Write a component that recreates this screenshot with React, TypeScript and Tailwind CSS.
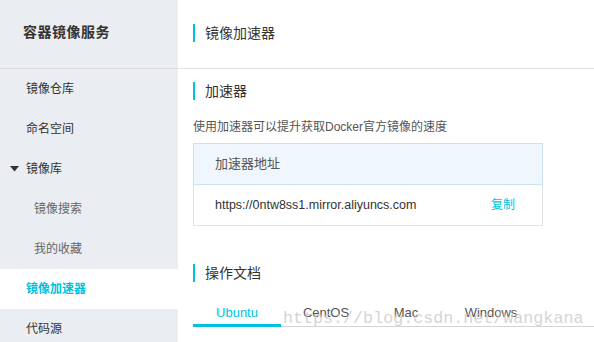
import React from "react";

const font = { fontFamily: '"Liberation Sans", Arial, "Noto Sans CJK SC", sans-serif' };

function SideItem({ label, sub, active, arrow }: { label: string; sub?: boolean; active?: boolean; arrow?: boolean }) {
  return (
    <div
      className={`h-[40px] shrink-0 flex items-center text-[12px] ${active ? "bg-white text-[#00c1de] font-bold" : sub ? "text-[#666]" : "text-[#333]"} ${sub ? "pl-[34px]" : arrow ? "pl-[10px]" : "pl-[26px]"}`}
    >
      {arrow && (
        <svg width="9" height="6" viewBox="0 0 9 6" className="mr-[7px]">
          <path d="M0 0 L9 0 L4.5 5.5 Z" fill="#333" />
        </svg>
      )}
      {label}
    </div>
  );
}

function Title({ text }: { text: string }) {
  return (
    <div className="flex items-center h-[18px]">
      <div className="w-[2px] h-[18px] bg-[#00c1de]" />
      <span className="ml-[10px] text-[14px] text-[#333]">{text}</span>
    </div>
  );
}

export default function App() {
  return (
    <div className="w-[594px] h-[342px] overflow-hidden flex bg-white relative" style={font}>
      <div className="w-[178px] shrink-0 bg-[#eaedf1] flex flex-col">
        <div className="h-[69px] shrink-0 border-b border-[#dcdcdc] flex items-center pl-[23px] pb-[4px] text-[14px] font-bold text-[#333] tracking-[0.5px]">
          容器镜像服务
        </div>
        <SideItem label="镜像仓库" />
        <SideItem label="命名空间" />
        <SideItem label="镜像库" arrow />
        <SideItem label="镜像搜索" sub />
        <SideItem label="我的收藏" sub />
        <SideItem label="镜像加速器" active />
        <SideItem label="代码源" />
      </div>
      <div className="flex-1 flex flex-col">
        <div className="h-[69px] shrink-0 border-b border-[#e3e3e3] pl-[15px] pt-[24px]">
          <Title text="镜像加速器" />
        </div>
        <div className="pl-[15px] pt-[13px]">
          <Title text="加速器" />
          <div className="mt-[18px] text-[12px] text-[#555]">使用加速器可以提升获取Docker官方镜像的速度</div>
          <div className="mt-[7px] w-[350px] border border-[#e3e3e3]">
            <div className="h-[42px] bg-[#eff6fe] border-b border-[#c9e2fa] -m-px mb-0 border-x border-t flex items-center pl-[21px] text-[13px] text-[#555]">
              加速器地址
            </div>
            <div className="h-[40px] flex items-center pl-[21px] pr-[27px] text-[12.5px] text-[#333]">
              <span>https://0ntw8ss1.mirror.aliyuncs.com</span>
              <span className="ml-auto text-[12px] text-[#00c1de]">复制</span>
            </div>
          </div>
          <div className="mt-[38px]">
            <Title text="操作文档" />
          </div>
          <div className="mt-[22px] flex border-b border-[#d4d4d4] h-[23px] text-[13px] leading-[18px] text-[#555]">
            <div className="w-[88px] text-center text-[#00c1de] border-b-[3px] border-[#00c1de] -mb-px">Ubuntu</div>
            <div className="w-[90px] text-center">CentOS</div>
            <div className="w-[70px] text-center">Mac</div>
            <div className="w-[100px] text-center">Windows</div>
          </div>
        </div>
      </div>
      <div
        className="absolute left-[283px] top-[311px] text-[16.7px] text-[#c8c8c8] opacity-75 pointer-events-none leading-none"
        style={{ fontFamily: '"Liberation Mono", "Courier New", monospace' }}
      >
        https://blog.csdn.net/wangkana
      </div>
    </div>
  );
}
